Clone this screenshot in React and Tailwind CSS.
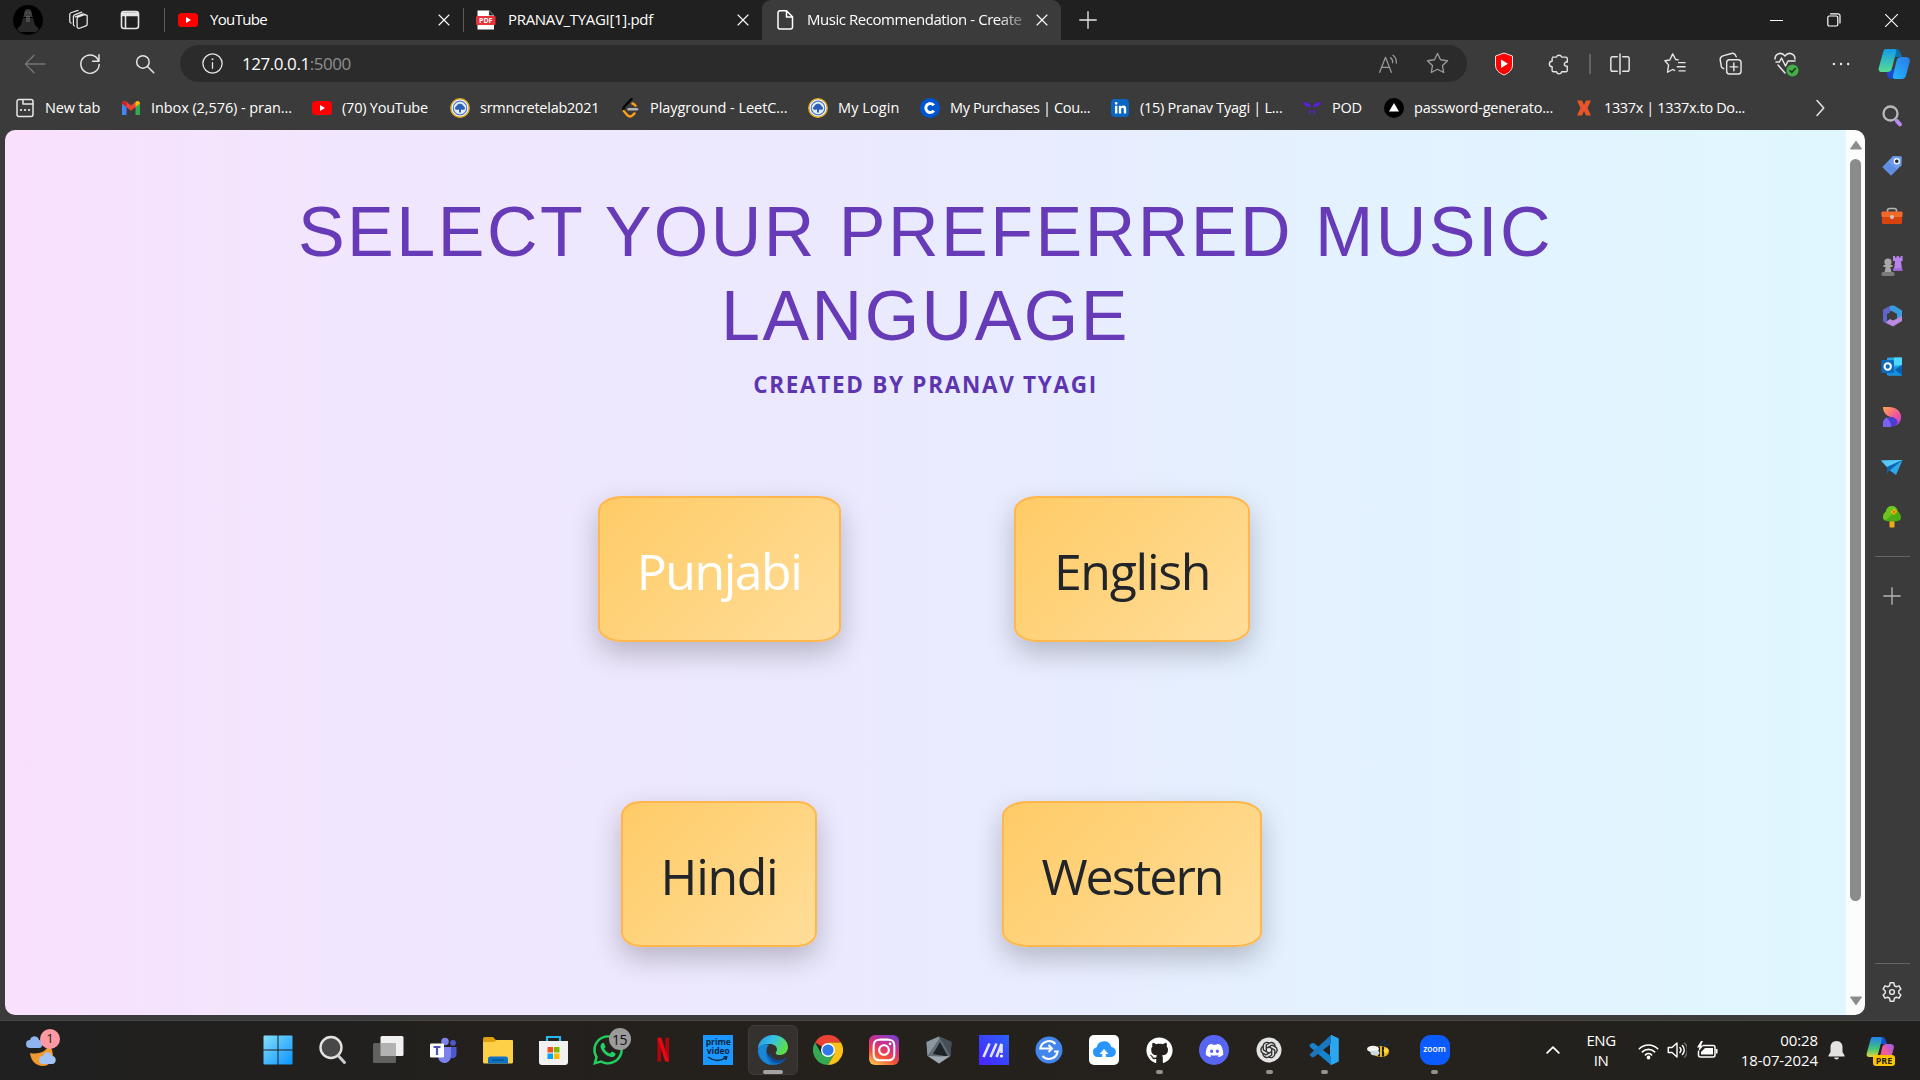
import React from "react";
import { FaGithub, FaDiscord, FaWhatsapp, FaInstagram, FaLinkedinIn } from "react-icons/fa";

const Svg = ({ s = 20, vb = "0 0 24 24", sw = 1.5, className = "text-[#e6e6e6]", children }) => (
  <svg width={s} height={s} viewBox={vb} fill="none" stroke="currentColor" strokeWidth={sw} strokeLinecap="round" strokeLinejoin="round" className={"shrink-0 " + className}>
    {children}
  </svg>
);
const Art = ({ s = 24, vb = "0 0 24 24", children }) => (
  <svg width={s} height={s} viewBox={vb} className="shrink-0">{children}</svg>
);
const Slot = ({ className, children }) => (
  <div className={"flex shrink-0 items-center justify-center " + className}>{children}</div>
);

const Close = () => <Svg s={12} sw={2.2} className="text-white"><path d="M2 2l20 20M22 2L2 22" /></Svg>;
const YouTube = () => (
  <Art s={20} vb="0 0 20 20"><rect y="3" width="20" height="14" rx="3.500" fill="#f00" /><path d="M8 7l5 3-5 3z" fill="#fff" /></Art>
);
const Pdf = () => (
  <Art s={20} vb="0 0 20 20">
    <path d="M1.500 .5h11.500l5 5v14H1.500z" fill="#fff" /><path d="M13 .5v5h5z" fill="#222" stroke="#aaa" strokeWidth=".5" />
    <rect x="0" y="6" width="19.500" height="9" rx="1" fill="#e9323a" />
    <text x="9.700" y="13" textAnchor="middle" fontSize="7" fontWeight="700" fill="#fff" fontFamily="Open Sans, sans-serif">PDF</text>
  </Art>
);
const Seal = () => (
  <Art s={20} vb="0 0 20 20">
    <circle cx="10" cy="10" r="9.200" fill="#fff" stroke="#d8a928" strokeWidth="1.500" /><circle cx="10" cy="10" r="6.800" fill="#e6eefb" stroke="#4a78c8" strokeWidth="1.200" />
    <path d="M5 10.800c-.3-2 1.200-2 1.800-3.300 1-2.200 5.400-2.200 6.400 0 .6 1.300 2.100 1.300 1.800 3.300-.5 1.200-2.500 1-4 .7v3H9v-3c-1.500.3-3.500.5-4-.7z" fill="#2d5fb8" />
  </Art>
);

const marks = [
  { w: "w-[106px]", t: "New tab", tr: "tracking-[-0.15px]", icon: <Svg s={20} vb="0 0 20 20" sw={1.5}><path d="M4 1.500h12a2 2 0 0 1 2 2v13a2 2 0 0 1-2 2H4a2 2 0 0 1-2-2v-13a2 2 0 0 1 2-2z" /><path d="M8 2v4h10" /><path d="M6 12h.1M10 12h.1M14 12h.1" strokeWidth="2.200" /></Svg> },
  { w: "w-[191px]", t: "Inbox (2,576) - pran...", tr: "tracking-[-0.08px]", icon: <Art s={20} vb="0 0 20 20"><path d="M1 17V5l4.500 3.500V17z" fill="#4285f4" /><path d="M19 17V5l-4.500 3.500V17z" fill="#34a853" /><path d="M1 5.500C1 3 3.500 2.500 5 3.600l5 4 5-4v5.200l-5 4-5-4L1 5.500z" fill="#ea4335" /><path d="M14.500 4l.7-.5C17 2.500 19 3.500 19 5.500L14.500 9z" fill="#fbbc04" /><path d="M1 5.500C1 4 2 3.200 3 3.100L5.500 5v4z" fill="#c5221f" /></Art> },
  { w: "w-[138px]", t: "(70) YouTube", tr: "tracking-[-0.22px]", icon: <YouTube /> },
  { w: "w-[170px]", t: "srmncretelab2021", tr: "tracking-[-0.25px]", icon: <Seal /> },
  { w: "w-[188px]", t: "Playground - LeetC...", tr: "tracking-[-0.05px]", icon: <Art s={20} vb="0 0 20 20"><g fill="none" strokeLinecap="round" strokeWidth="2.400"><path d="M11.500 1L4.500 8.500c-1.500 1.700-1.400 3.200-.3 4.800" stroke="#050505" /><path d="M3.800 13l3.500 4.200c1.700 1.600 3.800 1.500 5.200.2l2-2M12.500 5.500c1 .2 1.700.8 3 2.200" stroke="#ffa116" /><path d="M8.500 11.300h8.500" stroke="#b3b3b3" /></g></Art> },
  { w: "w-[112px]", t: "My Login", tr: "tracking-[0.1px]", icon: <Seal /> },
  { w: "w-[190px]", t: "My Purchases | Cou...", tr: "tracking-[-0.33px]", icon: <Art s={20} vb="0 0 20 20"><circle cx="10" cy="10" r="10" fill="#0056d2" /><path d="M13.800 7.400A4.400 4.400 0 1 0 13.800 12.600" fill="none" stroke="#fff" strokeWidth="3" /></Art> },
  { w: "w-[192px]", t: "(15) Pranav Tyagi | L...", tr: "tracking-[-0.27px]", icon: <span className="mx-px flex size-[18px] shrink-0 items-center justify-center rounded-sm bg-[#0a66c2] text-[13px] text-white"><FaLinkedinIn /></span> },
  { w: "w-[82px]", t: "POD", tr: "tracking-[-0.2px]", icon: <Art s={20} vb="0 0 20 20"><g fill="#5a1fd6"><path d="M1 4c4-.5 7 1 8 5-4 .5-7-1-8-5zM19 4c-4-.5-7 1-8 5 4 .5 7-1 8-5z" /><path d="M8.500 11c1 2 .5 4-1.500 5.500-.7-2-.3-4 1.500-5.500zM11.500 11c-1 2-.5 4 1.500 5.500.7-2 .3-4-1.500-5.500z" /></g></Art> },
  { w: "w-[190px]", t: "password-generato...", tr: "tracking-[-0.17px]", icon: <Art s={20} vb="0 0 20 20"><circle cx="10" cy="10" r="10" fill="#000" /><path d="M10 5l5 8.500H5z" fill="#fff" /></Art> },
  { w: "w-[190px]", t: "1337x | 1337x.to Do...", tr: "tracking-[-0.37px]", icon: <Art s={20} vb="0 0 20 20"><path d="M3 2.500h5L10 7l2-4.500h5L13.500 10l3.500 7.500h-5L10 13l-2 4.500H3L6.500 10z" fill="#e8552a" /></Art> },
];

const side = [
  <Art s={24}><circle cx="10.500" cy="9.500" r="7" fill="none" stroke="#b9b9b9" strokeWidth="2.300" /><path d="M16.800 16.800l3.200 3.500" stroke="#b98af0" strokeWidth="4" strokeLinecap="round" /></Art>,
  <Art s={24}><path d="M13 2l8 .3.800.9-.3 8L11 21.500 2.500 13z" fill="#6b9bea" /><path d="M2.500 13L11 21.500l6-6L8 8z" fill="#5f8de4" /><circle cx="16.800" cy="7.200" r="2.500" fill="#223" stroke="#eaf2ff" strokeWidth="1.400" /></Art>,
  <Art s={24}><path d="M7.500 8V6.500a2 2 0 0 1 2-2h5a2 2 0 0 1 2 2V8" fill="none" stroke="#b4b4b4" strokeWidth="1.600" /><rect x="2" y="8" width="20" height="12" rx="1.200" fill="#d8430d" /><rect x="1.500" y="7.500" width="21" height="5.500" rx="1" fill="#f3692a" /><circle cx="12" cy="13" r="2" fill="#c9c9c9" /></Art>,
  <Art s={24}><path d="M13 2h2v1.500h1.700V2h2.200v1.500h1.700V2h2v5h-1.500l.8 8.500H14L15 7h-2z" fill="#b884ec" /><path d="M13 14.500h9.500v2.500H13z" fill="#9a66d4" /><g fill="#a8a8a8"><circle cx="8" cy="8" r="3.600" /><path d="M3.500 11h9v2h-9zM6 12h4l1.500 6h-7z" /></g><rect x="1.500" y="18" width="13" height="4" rx="1.500" fill="#7b7b7b" /></Art>,
  <Art s={24}><path d="M11 1.500L3 6v11l4 2.500V9l6-3.500z" fill="#8a84e4" /><path d="M10 2l4-.5 8 5v8l-5 2V10l-7-4z" fill="#3b9be0" /><path d="M22 12v5l-9 5.500-8-4 5-3.500 3 1.500z" fill="#b98adf" /><path d="M10 2v6.500L7 10v9L3 17V6.500z" fill="#5d66c8" /></Art>,
  <Art s={24}><rect x="7" y="2.500" width="15" height="18" rx="1" fill="#28a8ea" /><path d="M14 2.500h8v8h-8z" fill="#50d9ff" /><path d="M7 15l15-5v10.500H8z" fill="#1490df" /><path d="M15 15l7-5v10z" fill="#0a5fae" /><rect x="1.500" y="5" width="12.500" height="13" rx="1" fill="#0f6cbd" /><circle cx="7.700" cy="11.500" r="3.200" fill="none" stroke="#fff" strokeWidth="2" /></Art>,
  <Art s={24}><defs><linearGradient id="dz" x1="0" y1="0" x2="1" y2="1"><stop stopColor="#ffa64d" /><stop offset=".6" stopColor="#f0559a" /><stop offset="1" stopColor="#b73af0" /></linearGradient></defs><path d="M3 2h6c8 0 13 5 12 12-1 4-4 6-6 7 2-5 1-8-4-9C6 11 3 7 3 2z" fill="url(#dz)" /><path d="M3 22v-3c0-5 4-7 8-7 3 0 6 2 7 5-2 4-5 5-9 5z" fill="#4a3fd0" /><path d="M3 22v-3c0-4 2-6 4-6.500 2 3 5 6 4 9.500z" fill="#7a63f2" /></Art>,
  <Art s={24}><path d="M1 5.500L22.500 5 16 20l-6-4.500z" fill="#2ca9e8" /><path d="M1 5.500L22.500 5 7 12z" fill="#56c9f7" /><path d="M7 12l15.500-7L9 16l-2 3z" fill="#0d63b0" /></Art>,
  <Art s={24}><rect x="9.500" y="15" width="5" height="7.500" rx=".8" fill="#f2a818" /><path d="M12 1c4 0 6 3.500 6 5.500 2 1.500 3 4 3 6 0 3-3 4-9 4s-9-1-9-4c0-2 1-4.500 3-6C6 4.500 8 1 12 1z" fill="#4dab16" /><path d="M12 1c3 0 4 2 5 4L6 15c-2-.5-3-1.500-3-3 0-2 1-4 3-5.500C6 4.500 8 1 12 1z" fill="#6cc51e" /><path d="M14 4.800v4M12 6.800h4" stroke="#ffb400" strokeWidth="2.200" strokeLinecap="round" /><circle cx="14" cy="6.800" r="1.100" fill="#e8481c" /></Art>,
];

const OpenAIMark = () => (
  <Art s={30} vb="0 0 30 30"><circle cx="15" cy="15" r="12.500" fill="#e4e4e4" />
    <g fill="none" stroke="#333" strokeWidth="1.400" strokeLinejoin="round">
      {[0, 60, 120, 180, 240, 300].map((a) => <path key={a} transform={`rotate(${a} 15 15)`} d="M12.300 16.500V10l3.200-2a3.800 3.800 0 0 1 5.500 4.200" />)}
    </g>
  </Art>
);

const tasks = [
  { el: <Art s={30} vb="0 0 30 30"><defs><linearGradient id="win" x1="0" y1="0" x2="1" y2="1"><stop stopColor="#83e0fb" /><stop offset="1" stopColor="#0b93ff" /></linearGradient></defs><path d="M.5 1.500a1 1 0 0 1 1-1h13v14H.5zM15.500.5h13a1 1 0 0 1 1 1v13h-14zM.5 15.500h14v14h-13a1 1 0 0 1-1-1zM15.500 15.500h14v13a1 1 0 0 1-1 1h-13z" fill="url(#win)" /></Art> },
  { el: <Art s={30} vb="0 0 30 30"><circle cx="13" cy="12.500" r="10.500" fill="#484848" stroke="#e2e2e2" strokeWidth="2.400" /><path d="M20.500 21l6 6.500" stroke="#c9ced3" strokeWidth="3" strokeLinecap="round" /></Art> },
  { el: <Art s={32} vb="0 0 32 32"><rect x="8.500" y="2" width="23" height="20" rx="1.500" fill="#f0f0f0" /><rect x="1" y="9" width="23" height="20" rx="1.500" fill="#6a6a6a" fillOpacity=".88" /><path d="M8.500 9H24v13H8.500z" fill="#c4c4c4" fillOpacity=".75" /></Art> },
  { el: <Art s={30} vb="0 0 30 30"><circle cx="17" cy="6.500" r="3.800" fill="#7b83eb" /><circle cx="25" cy="7.800" r="2.900" fill="#5059c9" /><path d="M22 12h6.500v7c0 3-2.500 5-5.500 4z" fill="#5059c9" /><path d="M10 12h13v9a6.500 6.500 0 0 1-12.500 3z" fill="#7b83eb" /><rect x="2" y="8.500" width="14" height="14" rx="1.200" fill="#fff" /><path d="M5.500 12h7M9 12v8" stroke="#4b53bc" strokeWidth="2.200" /></Art> },
  { el: <Art s={32} vb="0 0 32 32"><path d="M1 5a2 2 0 0 1 2-2h8l3 3h15v6H1z" fill="#e0a010" /><path d="M1 8h11l3-2h15a1 1 0 0 1 1 1v21a1.500 1.500 0 0 1-1.500 1.500h-27A1.500 1.500 0 0 1 1 28z" fill="#fdd048" /><path d="M6 29.500V25a2.500 2.500 0 0 1 2.500-2.500h15A2.500 2.500 0 0 1 26 25v4.500z" fill="#0f72c4" /><path d="M10 26h12" stroke="#07508f" strokeWidth="1.300" /></Art> },
  { el: <Art s={31} vb="0 0 31 31"><path d="M9 8V2h13v6" fill="none" stroke="#28b7f0" strokeWidth="2.200" /><path d="M1 6h29v21a3 3 0 0 1-3 3H4a3 3 0 0 1-3-3z" fill="#f1f1f1" /><path d="M9.500 12h5.500v5.500H9.500z" fill="#f25022" /><path d="M16 12h5.500v5.500H16z" fill="#7fba00" /><path d="M9.500 18.500H15V24H9.500z" fill="#00a4ef" /><path d="M16 18.500h5.500V24H16z" fill="#ffb900" /></Art> },
  { el: <FaWhatsapp size={34} color="#22d161" />, badge: "15" },
  { el: <Art s={28} vb="0 0 30 30"><path d="M9 2h4v25l-4 .5zM17.500 2h4v25.500l-4-.5z" fill="#b00610" /><path d="M9 2h4.200l8.300 25.500-4.200-.5z" fill="#e50914" /></Art> },
  { el: <div className="flex h-[30px] w-[30px] flex-col items-center bg-[#1a98ff] pt-[2px] font-['Open_Sans',sans-serif] text-[8.500px] font-bold leading-[9px] text-[#082540]"><span className="h-[9px]">prime</span><span className="h-[9px]">video</span><svg width="22" height="8" viewBox="0 0 22 8"><path d="M1 2c6 4.500 13 4.500 18 .5M16.500 1.700l3.200.2-1 3" fill="none" stroke="#082540" strokeWidth="1.500" /></svg></div> },
  { active: true, el: <Art s={32} vb="0 0 32 32"><defs><linearGradient id="eg" x1="0" y1="0" x2="1" y2=".4"><stop stopColor="#2794d8" /><stop offset=".5" stopColor="#35c1e8" /><stop offset="1" stopColor="#5be04a" /></linearGradient></defs><path d="M1 15C1 7 8 1 16 1c9 0 15 6 15 12 0 5-4 8-8 8-3 0-5-1-4-3 3-4-1-8-6-8-6 0-11 2-12 5z" fill="url(#eg)" /><path d="M1 15c2-4 7-5 11-4-4 2-4 14 8 16 4 .5 7-1 9-3-3 5-8 7-13 7C7 31 0 24 1 15z" fill="#0f6fc4" /><path d="M12 11c-5 3-4 16 4 19.800C8 31 1.500 24.500 1 16c1-5 7-7 11-5z" fill="#1b86d6" /><path d="M13 18c0 5 5 9 11 8 2-.3 3-1 4-2 1 0 1.500.5 1 1-3 3-6 4-9 4-7-.5-9-7-7-11z" fill="#0a4f9e" /></Art> },
  { el: <Art s={30} vb="0 0 30 30"><path d="M15 15L2 7.500A15 15 0 0 1 28 7.500H15z" fill="#ea4335" /><path d="M2 7.500A15 15 0 0 0 15 30l6.500-11.250H8.500z" fill="#34a853" /><path d="M15 30A15 15 0 0 0 28 7.500H15l6.500 11.250z" fill="#fbc116" /><circle cx="15" cy="15" r="7" fill="#fff" /><circle cx="15" cy="15" r="5.600" fill="#3079e8" /></Art> },
  { el: <div className="flex size-[30px] items-center justify-center rounded-md bg-[linear-gradient(25deg,#fdc54d_5%,#f0523a_32%,#d42e83_60%,#7a3fd0_95%)] text-white"><FaInstagram size={26} /></div> },
  { el: <Art s={30} vb="0 0 30 30"><path d="M15 1.500L27.500 7l-1 14L15 28.500 3.500 21l-1-14z" fill="#626c75" /><path d="M15 1.500L2.500 7l1 14L15 4z" fill="#8b969f" /><path d="M16 7l8 14.500L9 19z" fill="#1c2329" /><path d="M15 1.500L27.500 7l-1 14z" fill="#464e56" /><path d="M4 21l12 .5 10-.5-11 7.500z" fill="#a0a9b0" /></Art> },
  { el: <Art s={30} vb="0 0 30 30"><defs><linearGradient id="ma" x1="1" y1="0" x2="0" y2="1"><stop stopColor="#2a63f8" /><stop offset="1" stopColor="#4a22ff" /></linearGradient></defs><path d="M0 0h30v30H0z" fill="url(#ma)" /><path d="M4.500 22L10.500 8.500M11.500 22l6-13.500M17.500 22l5-13v9" fill="none" stroke="#e6e4ff" strokeWidth="2.600" /><circle cx="22.500" cy="21" r="1.600" fill="#fff" /></Art> },
  { el: <Art s={28} vb="0 0 28 28"><circle cx="14" cy="14" r="13.500" fill="#4285ec" /><g fill="none" stroke="#fff" strokeWidth="2"><path d="M20.500 8A8.800 8.800 0 0 0 5.300 12.500H17M13.500 9l3.500 3.500-3.500 3.500M7.500 20A8.800 8.800 0 0 0 22.700 15.500H19" /></g></Art> },
  { el: <Art s={30} vb="0 0 30 30"><rect width="30" height="30" rx="5" fill="#fff" /><path d="M8.500 22a5 5 0 0 1-.8-9.800A7.500 7.500 0 0 1 22.300 12 5 5 0 0 1 21.500 22z" fill="#2a95fb" /><path d="M15 14l4.500 5h-2.700v5h-3.600v-5h-2.700z" fill="#fff" /></Art> },
  { run: true, el: <FaGithub size={27} color="#fff" /> },
  { el: <div className="flex size-[30px] items-center justify-center rounded-full bg-[#5865f2] text-white"><FaDiscord size={19} /></div> },
  { run: true, el: <OpenAIMark /> },
  { run: true, el: <Art s={30} vb="0 0 30 30"><path d="M22 0l7.500 3.500v23L22 30 21 22V8z" fill="#2fa9f4" /><path d="M22 30L1 12l-.5-2L3 8l2 .3L23 22z" fill="#1583ce" /><path d="M22 0L.5 19.500 3 22.500l2-.5L23 8z" fill="#1a77bd" /><path d="M22 0l7.500 3.500v23L22 30z" fill="#2ba6f0" /></Art> },
  { el: <Art s={26} vb="0 0 26 26"><path d="M14 8l3-3 3-2M18 8l6-1" fill="none" stroke="#15304f" strokeWidth="1.500" /><ellipse cx="15" cy="14.500" rx="8" ry="5.500" fill="#e9b71c" /><path d="M13 9.500v10M17 9.500v10" stroke="#1d1d1d" strokeWidth="2" /><ellipse cx="7" cy="12" rx="6" ry="3.200" fill="#f4f4f4" /><ellipse cx="9" cy="16" rx="4.500" ry="2.400" fill="#cdd8e2" /><circle cx="20" cy="13.500" r="2.400" fill="#ffd83b" /></Art> },
  { run: true, el: <div className="flex size-[30px] items-center justify-center rounded-[11px] bg-[#0b5cff] pb-[2px] font-['Open_Sans',sans-serif] text-[8.500px] font-semibold leading-none text-white">zoom</div> },
];

const Card = ({ className, children }) => (
  <div className={"flex h-[146px] items-center justify-center rounded-[10%] border-[2.500px] border-[#ffb74d] bg-[linear-gradient(135deg,#ffcb66,#ffdd99)] pt-1 text-[50px] leading-none shadow-[0_11px_28px_rgba(0,0,0,0.23)] " + className}>
    {children}
  </div>
);

const Tab = ({ icon, title, className, textClass = "" }) => (
  <div className={"flex h-10 shrink-0 items-center pr-[13px] " + className}>
    {icon}
    <span className={"ml-3 mr-2 flex-1 overflow-hidden whitespace-nowrap pb-[2px] " + textClass}>{title}</span>
    <Close />
  </div>
);

export default function App() {
  return (
    <div className="flex h-[1080px] w-[1920px] flex-col overflow-hidden bg-[#3b3b3b] font-['Open_Sans','Noto_Sans',sans-serif] text-[15px] text-white">
      {/* Tab strip */}
      <div className="flex h-10 shrink-0 bg-[#202020]">
        <Slot className="h-10 w-14">
          <svg width="30" height="30" viewBox="0 0 30 30"><circle cx="15" cy="15" r="15" fill="#000" /><g fill="#3d3d3d"><path d="M15 4c3 0 4 3 4 6l1 2H10l1-2c0-3 1-6 4-6z" /><path d="M10 13h10l2 7 4 4-3 3H7l-3-3 4-4z" opacity=".65" /></g><path d="M13 8h1M16 8h1M14 11v6M16 11v6" stroke="#888" strokeWidth=".8" /></svg>
        </Slot>
        <Slot className="h-10 w-[43px]"><Svg s={22} sw={1.4}><path d="M9 8.500l8.500-3.200a1 1 0 0 1 1.400.9L22 7v9.500a2 2 0 0 1-1.300 1.800l-7 2.700a2 2 0 0 1-2.700-1.900v-8.600a2 2 0 0 1 1.300-1.900L20 6" /><path d="M8 18.500a2 2 0 0 1-1-1.800V8.200a2 2 0 0 1 1.300-1.900L16 3.500M4.500 15.500a2 2 0 0 1-1.500-2V6a2 2 0 0 1 1.300-1.900L12 1.500" /></Svg></Slot>
        <Slot className="h-10 w-[62px]"><Svg s={20} vb="0 0 20 20" sw={1.6}><rect x="1.500" y="1.500" width="17" height="17" rx="2.500" /><path d="M2 3h16v2.500H2z" fill="currentColor" /><path d="M5.500 6v12" /></Svg></Slot>
        <Slot className="h-10 w-[6px]"><span className="h-6 w-px bg-[#5c5c5c]" /></Slot>
        <Tab className="w-[296px] pl-[11px]" icon={<YouTube />} title="YouTube" textClass="tracking-[-0.65px]" />
        <Slot className="h-10 w-px"><span className="h-6 w-px bg-[#5c5c5c]" /></Slot>
        <Tab className="w-[298px] pl-[12px]" icon={<Pdf />} title="PRANAV_TYAGI[1].pdf" textClass="tracking-[-0.32px]" />
        <Tab className="w-[299px] rounded-t-[9px] bg-[#3b3b3b] pl-[13px]" icon={<Svg s={20} vb="0 0 20 20" sw={1.5} className="text-white"><path d="M5 .8h6.500l6 6V17a2 2 0 0 1-2 2H5a2 2 0 0 1-2-2V2.800a2 2 0 0 1 2-2zM11.500 1v6h6" /></Svg>} title="Music Recommendation - Create" textClass="tracking-[-0.45px] [mask-image:linear-gradient(to_right,#000_86%,rgba(0,0,0,0.15))]" />
        <Slot className="h-10 w-[54px]"><Svg s={18} sw={1.8}><path d="M12 1v22M1 12h22" /></Svg></Slot>
        <div className="flex-1" />
        <Slot className="h-10 w-[57px]"><span className="h-px w-[13px] bg-white" /></Slot>
        <Slot className="h-10 w-[57px]"><Svg s={14} vb="0 0 14 14" sw={1.2} className="text-white"><rect x=".8" y="3" width="10" height="10" rx="1.500" /><path d="M3.500 .8H11a2 2 0 0 1 2 2V10" /></Svg></Slot>
        <Slot className="h-10 w-[58px]"><Svg s={13} vb="0 0 14 14" sw={1.2} className="text-white"><path d="M.5 .5l13 13M13.500 .5l-13 13" /></Svg></Slot>
      </div>

      {/* Address row */}
      <div className="flex h-[47px] shrink-0 items-center">
        <Slot className="w-[63px] pl-[7px]"><Svg s={22} sw={1.4} className="text-[#757575]"><path d="M23 12H2M11 2.500L1.500 12l9.500 9.500" /></Svg></Slot>
        <Slot className="w-[54px]"><Svg s={22} sw={1.6}><path d="M21.500 9A10 10 0 1 0 22 12.500M21.800 2v7h-7" /></Svg></Slot>
        <Slot className="w-[56px]"><Svg s={20} sw={1.8}><circle cx="9.500" cy="9.500" r="7.500" /><path d="M15 15l7.500 7.500" /></Svg></Slot>
        <div className="ml-[7px] flex h-[37px] w-[1288px] items-center rounded-full bg-[#2b2b2b] pl-[22px]">
          <Svg s={21} sw={1.5}><circle cx="12" cy="12" r="11" /><path d="M12 11v6.500" /><path d="M12 7v.1" strokeWidth="2.200" /></Svg>
          <span className="ml-[19px] flex-1 whitespace-nowrap text-[17px] tracking-[-0.45px]">127.0.0.1<span className="text-[#8f8f8f]">:5000</span></span>
          <Slot className="w-[49px]"><Svg s={20} sw={1.5} className="text-[#9a9a9a]"><path d="M2 22L9 4l7 18M4.500 16h9M15 4.500a6 6 0 0 1 2.500 6M18 1.500a11 11 0 0 1 4 9.500" /></Svg></Slot>
          <Slot className="mr-[5px] w-[50px]"><Svg s={23} sw={1.4} className="text-[#9a9a9a]"><path d="M12 1.500l3.200 6.600 7.300 1-5.300 5.100 1.300 7.200-6.500-3.400-6.500 3.400 1.300-7.200L1.500 9.100l7.300-1z" /></Svg></Slot>
        </div>
        <Slot className="ml-[10px] w-[54px]"><Art s={24}><path d="M12 1l8.500 3v9c0 5-3.500 8-8.500 10-5-2-8.500-5-8.500-10V4z" fill="#f00" stroke="#f3dede" strokeWidth="1" /><path d="M9 7.500l7 4.200-7 4.200z" fill="#fff" /></Art></Slot>
        <Slot className="w-[56px]"><Svg s={22} sw={1.5}><path d="M5 4.500h4.200a3 3 0 0 1 5.700 0H19.500a1.500 1.500 0 0 1 1.500 1.500v4c-4-1-4.500 5 0 4.300V19a1.500 1.500 0 0 1-1.500 1.500H15a3 3 0 0 1-5.800 0H6A1.500 1.500 0 0 1 4.500 19v-4a3 3 0 0 1 0-6V6" /></Svg></Slot>
        <Slot className="w-[6px]"><span className="h-5 w-[1.500px] bg-[#626262]" /></Slot>
        <Slot className="w-[53px]"><Svg s={22} sw={1.6}><path d="M9 4H4a2 2 0 0 0-2 2v12a2 2 0 0 0 2 2h5M15 4h5a2 2 0 0 1 2 2v12a2 2 0 0 1-2 2h-5M12 1v22" /></Svg></Slot>
        <Slot className="w-[58px]"><Svg s={22} sw={1.5}><path d="M15.500 7.500l-2.800-.4L9.500 1 6.300 7.600l-5.300.9 4 4.500L3.800 21l5.700-3 2 1M16 10.500h7M14.500 15h8.500M16.500 19.500H23" /></Svg></Slot>
        <Slot className="w-[53px]"><Svg s={23} sw={1.5}><rect x="8" y="8" width="15" height="15" rx="3" /><path d="M15.500 11.500v8M11.500 15.500h8M5 17.500l-1.500-1a3 3 0 0 1-1.300-3L1.200 8A4 4 0 0 1 4 4l9-2.500A4 4 0 0 1 17.500 4l.5 1" /></Svg></Slot>
        <Slot className="w-[57px]"><svg width="26" height="26" viewBox="0 0 26 26" fill="none" stroke="#e6e6e6" strokeWidth="1.500" strokeLinecap="round" strokeLinejoin="round"><path d="M2 8c0-5 6-8 10-3 4-5 10-2 10 3M3 11h3.500l2-4 4 8 2.500-5h7M5 14l7 8" /><circle cx="19.500" cy="19.500" r="6" fill="#45ae4b" stroke="none" /><path d="M16.800 19.500l2 2 3.500-4" stroke="#17391a" /></svg></Slot>
        <Slot className="w-[53px]"><Svg s={18} sw={3.2}><path d="M2.500 12h.1M12 12h.1M21.500 12h.1" /></Svg></Slot>
        <Slot className="w-[53px]">
          <svg width="32" height="30" viewBox="0 0 32 30"><defs><linearGradient id="ca" x1="0" y1="0" x2="0" y2="1"><stop stopColor="#139bea" /><stop offset="1" stopColor="#57dc8f" /></linearGradient><linearGradient id="cb" x1="1" y1="0" x2="0" y2="1"><stop stopColor="#2a78e8" /><stop offset="1" stopColor="#22b8fb" /></linearGradient></defs><path d="M14 0h4c3 0 4 2 5 5l1 3h-8z" fill="#0c6fa8" /><path d="M8 21h5c2 0 3-1 4-3l-2 12h-2c-3 0-4-4-5-9z" fill="#1c49d0" /><path d="M8 0h8c2 0 2.500 1.500 2 3.500L14 19c-.8 3-2 4-5 4H4c-3 0-4-2-3-5L5 3.500C5.700 1.200 6 0 8 0z" fill="url(#ca)" /><path d="M24 30h-7c-2 0-2.500-1.500-2-3.500L18.500 12c.8-3 2-4 5-4H28c3 0 4.500 2 3.700 5L28 26.500c-.7 2.300-2 3.500-4 3.500z" fill="url(#cb)" /></svg>
        </Slot>
      </div>

      <div className="flex min-h-0 flex-1">
        <div className="flex w-[1865px] flex-col">
          {/* Bookmarks */}
          <div className="flex h-[43px] shrink-0 items-center pb-px pl-[15px]">
            {marks.map((m) => (
              <div key={m.t} className={"flex shrink-0 items-center gap-[10px] whitespace-nowrap text-[14.500px] " + m.w}>
                {m.icon}
                <span className={m.tr}>{m.t}</span>
              </div>
            ))}
            <Slot className="ml-[46px] w-[20px]"><Svg s={18} sw={2}><path d="M8 2l9 10-9 10" /></Svg></Slot>
          </div>

          {/* Page */}
          <div className="ml-[5px] flex h-[885px] shrink-0 overflow-hidden rounded-[10px]">
            <main className="flex w-[1841px] flex-col items-center bg-[linear-gradient(to_right,#f9e0fc,#f1e6fd_17%,#ebe9fe_45%,#e3f2ff_75%,#e0f7ff)]">
              <h1 className="mt-[60px] w-[1400px] text-center font-['Liberation_Sans',Arial,sans-serif] text-[70px] leading-[84px] tracking-[2.500px] text-[#673ab7]">
                SELECT YOUR PREFERRED MUSIC LANGUAGE
              </h1>
              <p className="mt-[10px] h-[33px] text-[22.500px] font-bold leading-[33px] tracking-[1.700px] text-[#5e35b1]">CREATED BY PRANAV TYAGI</p>
              <div className="mr-[3px] mt-[95px] grid grid-cols-[416px_410px] gap-y-[159px] text-[#212529]">
                <div className="flex justify-center"><Card className="w-[243px] tracking-[-1.500px] text-white">Punjabi</Card></div>
                <div className="flex justify-center"><Card className="w-[236px] tracking-[-1.300px]">English</Card></div>
                <div className="flex justify-center"><Card className="w-[196px] tracking-[-1.300px]">Hindi</Card></div>
                <div className="flex justify-center"><Card className="w-[260px] tracking-[-2px]">Western</Card></div>
              </div>
            </main>
            <div className="flex w-[19px] flex-col items-center bg-[#fcfcfc]">
              <svg width="14" height="10" viewBox="0 0 14 10" className="mt-[10px]"><path d="M7 1.200L12.500 9h-11z" fill="#8b8b8b" stroke="#8b8b8b" strokeLinejoin="round" /></svg>
              <div className="mt-[9px] h-[742px] w-[11px] rounded-full bg-[#8b8b8b]" />
              <div className="flex-1" />
              <svg width="14" height="10" viewBox="0 0 14 10" className="mb-[9px]"><path d="M7 8.800L1.500 1h11z" fill="#8b8b8b" stroke="#8b8b8b" strokeLinejoin="round" /></svg>
            </div>
          </div>
        </div>

        {/* Sidebar */}
        <div className="flex flex-1 flex-col items-center pr-px pt-[4px]">
          {side.map((s, i) => <Slot key={i} className="h-[50.100px] w-full">{s}</Slot>)}
          <span className="mt-[14px] h-px w-[35px] bg-[#646464]" />
          <Slot className="mt-[19px] h-10"><Svg s={18} sw={1.8} className="text-[#b5b5b5]"><path d="M12 1v22M1 12h22" /></Svg></Slot>
          <div className="flex-1" />
          <span className="h-px w-[35px] bg-[#646464]" />
          <Slot className="mb-[17px] mt-[17px]"><Svg s={22} sw={1.6}><path d="M10 2h4l.7 3.200 2 1.100 3-1 2 3.500L19.300 11v2l2.400 2.200-2 3.500-3-1-2 1.100L14 22h-4l-.7-3.200-2-1.100-3 1-2-3.500L4.700 13v-2L2.300 8.800l2-3.500 3 1 2-1.100z" /><circle cx="12" cy="12" r="2.600" /></Svg></Slot>
        </div>
      </div>

      {/* Taskbar */}
      <div className="flex h-[60px] shrink-0 border-t border-[#474747] bg-[linear-gradient(to_right,#202020,#24201c_35%,#25221d_75%,#201f1d)] pb-px">
        <div className="flex w-[250px] items-center pl-[26px]">
          <div className="relative">
            <svg width="32" height="34" viewBox="0 0 32 34"><path d="M4 20c10 2 17-2 19-9 6 9 6 21-6 22C10 33 5 28 4 20z" fill="#f29a2e" /><path d="M4 15a4 4 0 0 1 0-8c1-5 8-5 9 0 4 0 5 8 0 8z" fill="#8fb4f0" /><path d="M17 31a4 4 0 0 1 0-8c1-5 8-5 9 0 5 0 5 8 0 8z" fill="#a4c4f6" /></svg>
            <span className="absolute -top-1 left-[14px] flex size-5 items-center justify-center rounded-full bg-[#ff99a4] text-[13px] text-[#222]">1</span>
          </div>
        </div>
        {tasks.map((t, i) => (
          <div key={i} className="relative flex w-[55.100px] shrink-0 items-center justify-center">
            <div className={t.active ? "flex h-[50px] w-[50px] items-center justify-center rounded-md border border-[#3f3b38] bg-[#35312e]" : "flex items-center"}>{t.el}</div>
            {t.badge && <span className="absolute left-[28px] top-[7px] flex size-[22px] items-center justify-center rounded-full bg-[#9b9b9b] text-[14px] tracking-tight text-[#111]">{t.badge}</span>}
            {t.active && <span className="absolute bottom-[5px] h-[4px] w-5 rounded-full bg-[#a5a3a2]" />}
            {t.run && <span className="absolute bottom-[5px] h-[4px] w-[7px] rounded-full bg-[#96938f]" />}
          </div>
        ))}
        <div className="flex flex-1 items-center whitespace-nowrap text-[15px] leading-5">
          <Slot className="ml-[77px] w-[28px]"><Svg s={14} sw={3} className="text-white"><path d="M2 17L12 7l10 10" /></Svg></Slot>
          <div className="ml-[14px] w-[40px] text-center tracking-[-0.5px]">ENG<br />IN</div>
          <Slot className="ml-[16px] w-[22px]"><Svg s={21} sw={1.9} className="text-white"><path d="M1.500 10a15 15 0 0 1 21 0M5 13.500a10 10 0 0 1 14 0M8.500 17a5 5 0 0 1 7 0" /><circle cx="12" cy="20" r="1.200" fill="currentColor" /></Svg></Slot>
          <Slot className="ml-[7px] w-[22px]"><Svg s={20} sw={1.7} className="text-white"><path d="M1.500 9v6H6l6 5.500v-17L6 9zM15.500 9a4.500 4.500 0 0 1 0 6M18.500 6.500a8 8 0 0 1 0 11" /><path d="M21 3.500a12 12 0 0 1 0 17" stroke="#6a6a6a" /></Svg></Slot>
          <Slot className="ml-[8px] w-[22px]"><svg width="21" height="20" viewBox="0 0 21 18"><path d="M6 4.500h10a2 2 0 0 1 2 2V14a2 2 0 0 1-2 2H3.500a2 2 0 0 1-2-2V10" fill="none" stroke="#fff" strokeWidth="1.500" /><path d="M8 7h8v6.500H4V11zM19 8h1.500v4.500H19zM4 0L0 6.500h2.500L1 11l5.500-6.500H4L6 0z" fill="#fff" /></svg></Slot>
          <div className="ml-auto w-[90px] text-right tracking-[-0.1px]">00:28<br />18-07-2024</div>
          <Slot className="ml-[8px] w-[20px]"><svg width="17" height="19" viewBox="0 0 17 19"><path d="M8.500 0c4 0 6 3 6 6v5l2 3.500v1H.5v-1l2-3.500V6c0-3 2-6 6-6zM6 16.500h5c-.5 2.500-4.500 2.500-5 0z" fill="#e4e2e0" /></svg></Slot>
          <div className="relative ml-[20px] mr-[26px]">
            <svg width="28" height="28" viewBox="0 0 32 30"><defs><linearGradient id="pa" x1="0" y1="0" x2="0" y2="1"><stop stopColor="#1f7ff0" /><stop offset=".6" stopColor="#45c476" /><stop offset="1" stopColor="#e8d53a" /></linearGradient><linearGradient id="pb" x1="0" y1="1" x2="1" y2="0"><stop stopColor="#f7614c" /><stop offset=".5" stopColor="#f05c9c" /><stop offset="1" stopColor="#9a5cf0" /></linearGradient></defs><path d="M14 0h4c3 0 4 2 5 5l1 3h-8z" fill="#1a4fd0" /><path d="M8 0h8c2 0 2.500 1.500 2 3.500L14 19c-.8 3-2 4-5 4H4c-3 0-4-2-3-5L5 3.500C5.700 1.200 6 0 8 0z" fill="url(#pa)" /><path d="M24 30h-7c-2 0-2.500-1.500-2-3.500L18.500 12c.8-3 2-4 5-4H28c3 0 4.500 2 3.700 5L28 26.500c-.7 2.300-2 3.500-4 3.500z" fill="url(#pb)" /></svg>
            <span className="absolute left-[7px] top-[19px] flex h-[11px] w-[22px] items-center justify-center rounded-[3px] bg-[#ffc400] text-[9px] font-bold leading-none text-[#222]">PRE</span>
          </div>
        </div>
      </div>
    </div>
  );
}
